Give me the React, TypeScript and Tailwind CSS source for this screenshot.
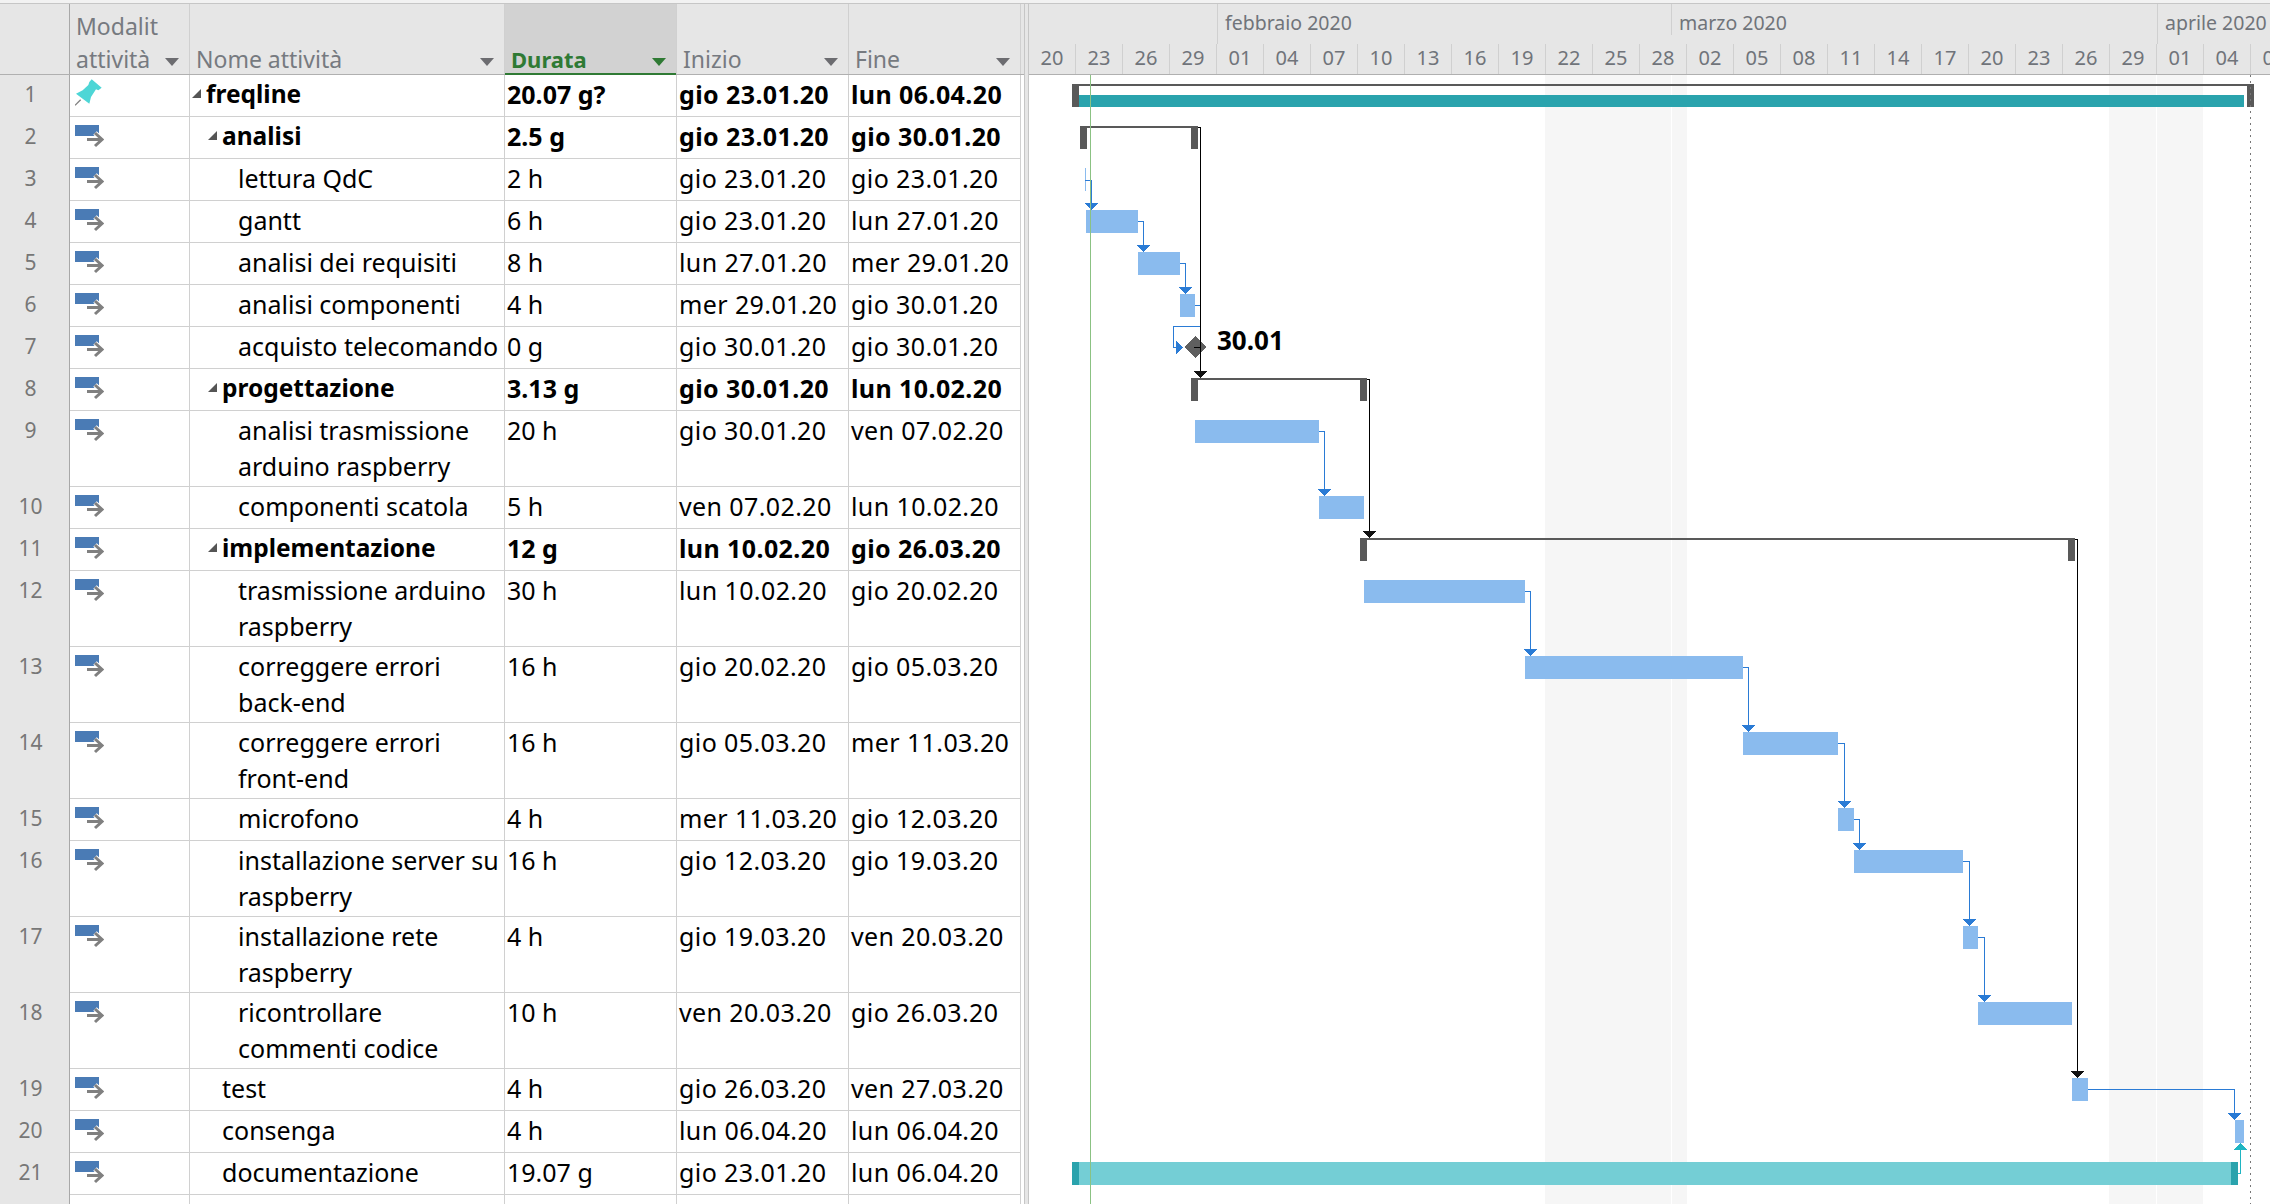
import React from 'react';

interface Task {
  id: number;
  name: string;
  duration: string;
  start: string;
  end: string;
  level: number;
  bold?: boolean;
  group?: boolean;
  pinned?: boolean;
  tall?: boolean;
}

const tasks: Task[] = [
  { id: 1, name: 'freqline', duration: '20.07 g?', start: 'gio 23.01.20', end: 'lun 06.04.20', level: 0, bold: true, group: true, pinned: true },
  { id: 2, name: 'analisi', duration: '2.5 g', start: 'gio 23.01.20', end: 'gio 30.01.20', level: 1, bold: true, group: true },
  { id: 3, name: 'lettura QdC', duration: '2 h', start: 'gio 23.01.20', end: 'gio 23.01.20', level: 2 },
  { id: 4, name: 'gantt', duration: '6 h', start: 'gio 23.01.20', end: 'lun 27.01.20', level: 2 },
  { id: 5, name: 'analisi dei requisiti', duration: '8 h', start: 'lun 27.01.20', end: 'mer 29.01.20', level: 2 },
  { id: 6, name: 'analisi componenti', duration: '4 h', start: 'mer 29.01.20', end: 'gio 30.01.20', level: 2 },
  { id: 7, name: 'acquisto telecomando', duration: '0 g', start: 'gio 30.01.20', end: 'gio 30.01.20', level: 2 },
  { id: 8, name: 'progettazione', duration: '3.13 g', start: 'gio 30.01.20', end: 'lun 10.02.20', level: 1, bold: true, group: true },
  { id: 9, name: 'analisi trasmissione\narduino raspberry', duration: '20 h', start: 'gio 30.01.20', end: 'ven 07.02.20', level: 2, tall: true },
  { id: 10, name: 'componenti scatola', duration: '5 h', start: 'ven 07.02.20', end: 'lun 10.02.20', level: 2 },
  { id: 11, name: 'implementazione', duration: '12 g', start: 'lun 10.02.20', end: 'gio 26.03.20', level: 1, bold: true, group: true },
  { id: 12, name: 'trasmissione arduino\nraspberry', duration: '30 h', start: 'lun 10.02.20', end: 'gio 20.02.20', level: 2, tall: true },
  { id: 13, name: 'correggere errori\nback-end', duration: '16 h', start: 'gio 20.02.20', end: 'gio 05.03.20', level: 2, tall: true },
  { id: 14, name: 'correggere errori\nfront-end', duration: '16 h', start: 'gio 05.03.20', end: 'mer 11.03.20', level: 2, tall: true },
  { id: 15, name: 'microfono', duration: '4 h', start: 'mer 11.03.20', end: 'gio 12.03.20', level: 2 },
  { id: 16, name: 'installazione server su\nraspberry', duration: '16 h', start: 'gio 12.03.20', end: 'gio 19.03.20', level: 2, tall: true },
  { id: 17, name: 'installazione rete\nraspberry', duration: '4 h', start: 'gio 19.03.20', end: 'ven 20.03.20', level: 2, tall: true },
  { id: 18, name: 'ricontrollare\ncommenti codice', duration: '10 h', start: 'ven 20.03.20', end: 'gio 26.03.20', level: 2, tall: true },
  { id: 19, name: 'test', duration: '4 h', start: 'gio 26.03.20', end: 'ven 27.03.20', level: 1 },
  { id: 20, name: 'consenga', duration: '4 h', start: 'lun 06.04.20', end: 'lun 06.04.20', level: 1 },
  { id: 21, name: 'documentazione', duration: '19.07 g', start: 'gio 23.01.20', end: 'lun 06.04.20', level: 1 },
];

const days = ['20', '23', '26', '29', '01', '04', '07', '10', '13', '16', '19', '22', '25', '28', '02', '05', '08', '11', '14', '17', '20', '23', '26', '29', '01', '04', '07'];

// x1, x2, y of the plain task bars, in page pixels
const bars = [
  [1086, 1138, 211], [1138, 1180, 253], [1180, 1195, 295], [1195, 1319, 421], [1319, 1364, 497],
  [1364, 1525, 581], [1525, 1743, 657], [1743, 1838, 733], [1838, 1854, 809], [1854, 1963, 851],
  [1963, 1978, 927], [1978, 2072, 1003], [2072, 2088, 1079], [2235, 2244, 1121],
];

// finish-to-start links: from x, from y, elbow x, arrow tip y
const links = [
  [1085, 181, 1091, 211], [1138, 222, 1143, 253], [1180, 264, 1185, 295], [1319, 432, 1324, 497],
  [1525, 592, 1530, 657], [1743, 668, 1748, 733], [1838, 744, 1844, 809], [1854, 820, 1859, 851],
  [1963, 862, 1969, 927], [1978, 938, 1984, 1003], [2088, 1090, 2234, 1121],
];

const summaries = [
  [1080, 1198, 127], [1191, 1367, 379], [1360, 2075, 539],
];

const font = 'font-["Noto_Sans","Open_Sans",sans-serif]';

const PinIcon = () => (
  <svg width="28" height="28" viewBox="45 24 84 84">
    <line x1="62" y1="86" x2="45" y2="103" stroke="#808080" strokeWidth="4" />
    <polygon points="95,25 125,50 115,58 108,55 93,78 88,98 48,68 68,58 85,42 88,33" fill="#4dd6d6" />
  </svg>
);

const AutoIcon = () => (
  <svg width="29" height="23" viewBox="0 0 29 23">
    <rect x="0" y="0" width="24" height="11" fill="#4a7bb5" />
    <path d="M20 8 L27 14.5 L20 21" fill="none" stroke="#fff" strokeWidth="5" />
    <path d="M12 14.5 L27 14.5 M20 8 L27 14.5 L20 21" fill="none" stroke="#808080" strokeWidth="3" />
  </svg>
);

const Caret = ({ green }: { green?: boolean }) => (
  <div className={`w-0 h-0 border-x-[7px] border-x-transparent border-t-[8px] ${green ? 'border-t-[#2f7a34]' : 'border-t-[#6c6c70]'}`} />
);

const HeaderCell = ({ width, label, active }: { width: string; label: string; active?: boolean }) => (
  <div className={`${width} relative flex items-end justify-between border-r border-[#d0d0d0] pl-[6px] pr-[10px] ${active ? 'bg-[#d2d2d2]' : ''}`}>
    <span className={`whitespace-pre-line leading-[33px] ${active ? 'text-[22px] font-bold text-[#2f7a34]' : 'text-[23px] text-[#767a80]'} translate-y-[2px]`}>{label}</span>
    <div className="mb-[8px]">
      <Caret green={active} />
    </div>
    {active && <div className="absolute left-0 right-0 -bottom-px h-[2px] bg-[#2f7a34]" />}
  </div>
);

const Row = ({ task }: { task: Task }) => {
  const weight = task.bold ? 'font-bold' : '';
  const dateCell = `w-[172px] shrink-0 border-r border-b border-[#d0d0d0] pl-[2px] pt-[1px] tracking-[0.4px] ${weight}`;
  return (
    <div className={`flex ${task.tall ? 'h-[76px]' : 'h-[42px]'} text-[25px] leading-[36px] text-black`}>
      <div className="w-[70px] shrink-0 bg-[#e6e6e6] border-r border-[#a8a8a8] text-center pr-[8px] text-[21px] text-[#777] pt-[1px]">
        {task.id}
      </div>
      <div className="w-[120px] shrink-0 border-r border-b border-[#d0d0d0] pl-[5px] pt-[4px]">
        {task.pinned ? <PinIcon /> : <div className="pt-[4px]"><AutoIcon /></div>}
      </div>
      <div
        className={`w-[315px] shrink-0 flex border-r border-b border-[#d0d0d0] pt-[1px] ${task.bold ? 'font-bold text-[24.5px]' : ''} ${
          task.level === 0 ? 'pl-[16px]' : task.level === 1 ? 'pl-[32px]' : 'pl-[48px]'
        }`}
      >
        <span className="relative whitespace-pre-line">
          {task.group && (
            <span className="absolute -left-[14px] top-[13px] w-0 h-0 border-l-[9px] border-l-transparent border-b-[9px] border-b-[#555]" />
          )}
          {task.name}
        </span>
      </div>
      <div className={`w-[172px] shrink-0 border-r border-b border-[#d0d0d0] pl-[2px] pt-[1px] ${weight}`}>{task.duration}</div>
      <div className={dateCell}>{task.start}</div>
      <div className={dateCell}>{task.end}</div>
    </div>
  );
};

const Arrow = ({ x, y, color }: { x: number; y: number; color: string }) => (
  <polygon points={`${x - 7},${y - 7} ${x + 7},${y - 7} ${x},${y}`} fill={color} />
);

const GanttChart = () => (
  <svg className="block" width="1241" height="1129" viewBox="1029 75 1241 1129" shapeRendering="crispEdges">
    {/* non working days */}
    <rect x="1545" y="75" width="142" height="1129" fill="#f6f6f6" />
    <rect x="2109" y="75" width="94" height="1129" fill="#f6f6f6" />
    <rect x="1671" y="75" width="1" height="1129" fill="#fff" />
    <rect x="2156" y="75" width="1" height="1129" fill="#fff" />

    {/* project summary */}
    <rect x="1072" y="84" width="1182" height="2" fill="#595959" />
    <rect x="1072" y="84" width="7" height="23" fill="#595959" />
    <rect x="1079" y="95" width="1165" height="12" fill="#2aa3ad" />
    <rect x="2247" y="84" width="7" height="23" fill="#595959" />

    {/* summaries */}
    {summaries.map(([x1, x2, y]) => (
      <g key={y} fill="#595959">
        <rect x={x1} y={y - 1} width={x2 - x1} height="2" />
        <rect x={x1} y={y - 1} width="7" height="23" />
        <rect x={x2 - 7} y={y - 1} width="7" height="23" />
      </g>
    ))}

    {/* milestone and zero length task */}
    <rect x="1085" y="168" width="1" height="23" fill="#8abbee" />
    <polygon points="1195,336 1206,347 1195,358 1184,347" fill="#5f5f5f" />

    {bars.map(([x1, x2, y]) => (
      <rect key={y} x={x1} y={y - 1} width={x2 - x1} height="23" fill="#8abbee" />
    ))}

    {/* documentazione */}
    <rect x="1072" y="1162" width="1166" height="23" fill="#74ced5" />
    <rect x="1072" y="1162" width="7" height="23" fill="#2aa3ad" />
    <rect x="2231" y="1162" width="7" height="23" fill="#2aa3ad" />

    {/* links */}
    {links.map(([x1, y1, x2, y2]) => (
      <g key={y1}>
        <path d={`M${x1} ${y1 - 1}H${x2}V${y2 - 8}`} fill="none" stroke="#2a7bd5" />
        <Arrow x={x2} y={y2 - 1} color="#2a7bd5" />
      </g>
    ))}
    <path d="M1195 305H1200V326H1173V347H1177" fill="none" stroke="#2a7bd5" />
    <polygon points="1176,341 1183,347 1176,354" fill="#2a7bd5" />
    <path d="M2238 1173H2240V1150" fill="none" stroke="#1fb5c2" />
    <polygon points="2234,1150 2247,1150 2240.5,1143" fill="#1fb5c2" />

    {/* summary links */}
    <path d="M1198 127H1200V371M1194 347H1200" fill="none" stroke="#000" />
    <Arrow x={1200} y={378} color="#111" />
    <path d="M1367 379H1369V531" fill="none" stroke="#000" />
    <Arrow x={1369} y={538} color="#111" />
    <path d="M2075 539H2077V1071" fill="none" stroke="#000" />
    <Arrow x={2077} y={1078} color="#111" />

    {/* today and status date */}
    <rect x="1090" y="75" width="1" height="1129" fill="#8bc283" />
    <line x1="2250.5" y1="75" x2="2250.5" y2="1204" stroke="#777" strokeDasharray="2 4" />

    <text x="1217" y="350" fontSize="26" fontWeight="700" fontFamily="'Noto Sans', sans-serif" fill="#000">30.01</text>
  </svg>
);

export default function App() {
  return (
    <div className={`w-[2270px] h-[1204px] overflow-hidden bg-white ${font}`}>
      <div className="h-[4px] bg-[#f2f2f2] border-b border-[#c6c6c6]" />
      <div className="flex h-[1200px]">
        {/* Sheet */}
        <div className="w-[1024px] shrink-0 flex flex-col">
          <div className="flex h-[71px] shrink-0 bg-[#e6e6e6] border-b border-[#b0b0b0]">
            <div className="w-[70px] shrink-0 border-r border-[#a8a8a8]" />
            <HeaderCell width="w-[120px] shrink-0" label={'Modalit\nattività'} />
            <HeaderCell width="w-[315px] shrink-0" label="Nome attività" />
            <HeaderCell width="w-[172px] shrink-0" label="Durata" active />
            <HeaderCell width="w-[172px] shrink-0" label="Inizio" />
            <HeaderCell width="w-[172px] shrink-0" label="Fine" />
          </div>
          {tasks.map(task => (
            <Row key={task.id} task={task} />
          ))}
          <div className="flex flex-1">
            <div className="w-[70px] shrink-0 bg-[#e6e6e6] border-r border-[#a8a8a8]" />
            <div className="w-[120px] shrink-0 border-r border-[#d0d0d0]" />
            <div className="w-[315px] shrink-0 border-r border-[#d0d0d0]" />
            <div className="w-[172px] shrink-0 border-r border-[#d0d0d0]" />
            <div className="w-[172px] shrink-0 border-r border-[#d0d0d0]" />
            <div className="w-[172px] shrink-0 border-r border-[#d0d0d0]" />
          </div>
        </div>

        {/* Splitter */}
        <div className="w-[5px] shrink-0 bg-[#e6e6e6] border-x border-[#c6c6c6]" />

        {/* Gantt */}
        <div className="flex-1 min-w-0 overflow-hidden flex flex-col">
          <div className="h-[71px] shrink-0 bg-[#e6e6e6] border-b border-[#b0b0b0] flex flex-col text-[#70747a]">
            <div className="flex h-[40px] text-[19.5px] leading-[38px] items-start">
              <div className="w-[188px] shrink-0" />
              <div className="w-[454px] shrink-0 h-[40px] border-l border-[#d0d0d0] pl-[7px]">febbraio 2020</div>
              <div className="w-[486px] shrink-0 h-[31px] border-l border-[#d0d0d0] pl-[7px]">marzo 2020</div>
              <div className="flex-1 h-[40px] border-l border-[#d0d0d0] pl-[7px] whitespace-nowrap">aprile 2020</div>
            </div>
            <div className="flex h-[30px] text-[20px] leading-[28px]">
              {days.map((day, i) => (
                <div key={i} className="w-[47px] shrink-0 border-r border-[#d0d0d0] text-center">
                  {day}
                </div>
              ))}
            </div>
          </div>
          <GanttChart />
        </div>
      </div>
    </div>
  );
}
